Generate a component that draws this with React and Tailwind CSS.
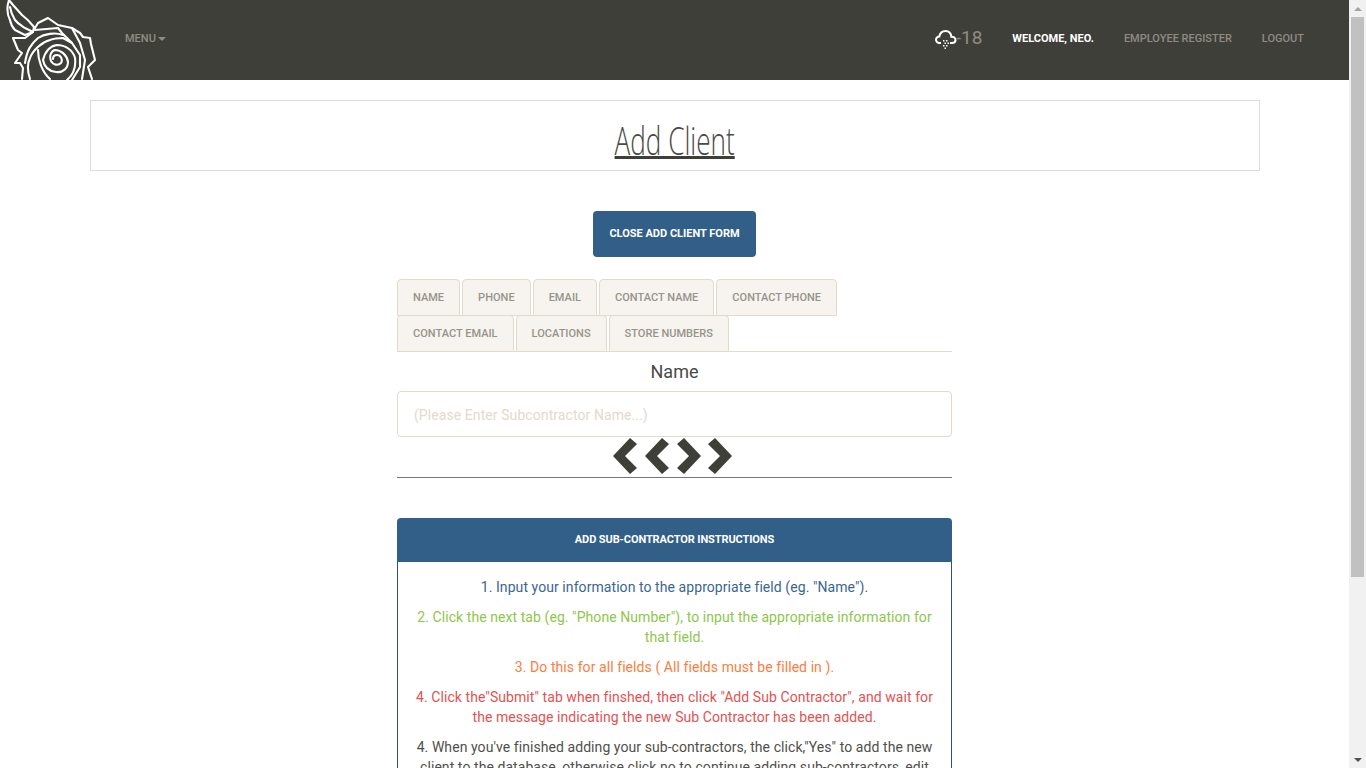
const row1 = ['Name', 'Phone', 'Email', 'Contact Name', 'Contact Phone'];
const row2 = ['Contact Email', 'Locations', 'Store Numbers'];

const Rose = () => (
  <svg viewBox="0 0 100 80" className="w-[100px] h-20 shrink-0" fill="none" stroke="#fff" strokeWidth="2.1" strokeLinejoin="round" strokeLinecap="round">
    {/* leaf */}
    <path d="M9 0 C7 6 7 14 10 20 C11 25 13 28 15 30 L25 35 L33 32 L34 27 C30 22 26 18 22 15 L13 5 Z" />
    <path d="M10 7 C11 13 13 17 15 20 C18 24 22 26 25 28 L33 32" />
    {/* outer edge */}
    <path d="M35 28 L38 23 L48 18 L58 25 L72 28 L80 33 L83 37 L90 38 L91 44 L95 60 L88 67 L92 79" />
    <path d="M33 32 L25 38 L13 38 L18 50 L22 53 L15 63 L20 63 L23 68 L22 79" />
    {/* petals */}
    <path d="M35 30 L58 28 L62 33 L72 43 L80 55 L80 67 L72 80" />
    <path d="M72 28 L80 43 L85 60 L82 79" />
    <path d="M25 63 C27 50 31 44 38 38 C44 34 55 32 63 35" />
    <path d="M30 79 C27 70 28 62 30 58 C33 50 42 42 50 40 C55 38 60 38 63 38 L72 43" />
    {/* centre spiral */}
    <path d="M38 50 C38 60 42 72 50 79" />
    <path d="M67 80 C74 74 76 66 75 58 C73 50 65 45 57 45 C50 46 45 52 43 60 C44 66 48 71 56 72 C63 73 68 68 68 62 C67 55 61 50 55 50 C51 51 49 56 51 61 C53 65 58 66 61 63 C63 60 61 55 57 55 C54 55 53 57 53 59" />
  </svg>
);

const Cloud = () => (
  <svg viewBox="0 0 22 20" className="w-[22px] h-5 -mr-px" fill="none">
    <path d="M6 14 H4.5 C2.5 14 1 12.5 1 10.8 C1 9 2.5 7.6 4.3 7.6 C5 4 7.5 2 10.5 2 C13.7 2 16 4.2 16.4 7.8 C18.7 7.6 20.5 9 20.5 11 C20.5 12.7 19 14 17 14 H15" stroke="#fff" strokeWidth="2" />
    <g fill="#fff">
      <rect x="8" y="11" width="1.5" height="1.5" />
      <rect x="11" y="11" width="1.5" height="1.5" />
      <rect x="9.5" y="13.5" width="1.5" height="1.5" />
      <rect x="12.5" y="13.5" width="1.5" height="1.5" />
      <rect x="8" y="16" width="1.5" height="1.5" />
      <rect x="11" y="16" width="1.5" height="1.5" />
      <rect x="9.5" y="18.5" width="1.5" height="1.5" />
    </g>
  </svg>
);

const ChevronLeft = () => (
  <svg viewBox="0 0 25 36" className="w-[25px] h-9 -mt-[2px]" fill="#3f3f3a">
    <polygon points="17,0 0,18 17,36 24,30 12,18 24,6" />
  </svg>
);

const ChevronRight = () => (
  <svg viewBox="0 0 24 36" className="w-6 h-9 -mt-[2px]" fill="#3f3f3a">
    <polygon points="7,0 24,18 7,36 0,30 12,18 0,6" />
  </svg>
);

const Tab = ({ label }) => (
  <button className="h-[37px] -mb-px px-[15px] pt-[2px] bg-[#f7f4ef] border border-[#e2dacd] rounded-t-[4px] text-[11px] font-medium uppercase tracking-[0.02px] text-[#96938a] whitespace-nowrap">
    {label}
  </button>
);

const App = () => {
  return (
    <div className="h-screen flex overflow-hidden bg-white font-['Roboto',sans-serif] text-[#50504a]">
      <div className="flex-1 min-w-0">
        <header className="h-20 bg-[#3f3f3a] flex items-center">
          <Rose />
          <button className="ml-[25px] -mt-[2px] text-[11px] font-medium uppercase text-[#8f8c82] flex items-center gap-[2px]">
            Menu
            <span className="w-0 h-0 border-x-4 border-x-transparent border-t-4 border-t-[#8f8c82]"></span>
          </button>
          <div className="ml-auto pr-[45px] -mt-[2px] flex items-center">
            <Cloud />
            <span className="text-[19px] -mt-px text-[#8f8c82]">-18</span>
            <span className="ml-[30px] text-[11px] font-bold uppercase text-white">Welcome, Neo.</span>
            <a className="ml-[30px] text-[11px] font-medium uppercase text-[#8f8c82]">Employee Register</a>
            <a className="ml-[30px] text-[11px] font-medium uppercase text-[#8f8c82]">Logout</a>
          </div>
        </header>

        <main className="pt-5 pb-[60px] px-[90px]">
          <div className="h-[71px] -mr-px border border-[#dcdcdc] flex items-center justify-center">
            <h1 className="text-[39px] leading-none mt-2 font-['Open_Sans',sans-serif] font-light text-[#4a4a45] underline decoration-[3px] decoration-[#3f3f3a] underline-offset-[1px] scale-x-[0.67] whitespace-nowrap">Add Client</h1>
          </div>

          <div className="mt-10 flex justify-center">
            <button className="h-[46px] w-[163px] bg-[#325f88] rounded-[4px] text-[11px] font-bold uppercase text-white">
              Close Add Client Form
            </button>
          </div>

          <div className="w-[555px] mx-auto mt-[22px]">
            <div className="border-b border-[#e2dacd]">
              <div className="flex gap-[2px]">
                {row1.map((t) => <Tab key={t} label={t} />)}
              </div>
              <div className="flex gap-[2px]">
                {row2.map((t) => <Tab key={t} label={t} />)}
              </div>
            </div>

            <div className="mt-[9px] text-center text-[18px] leading-[21px] text-[#4a4a45]">Name</div>
            <input
              placeholder="(Please Enter Subcontractor Name...)"
              className="mt-[9px] w-full h-[46px] px-4 pt-[2px] border border-[#e2dacd] rounded-[4px] text-[14px] tracking-[0.08px] placeholder:text-[#e2dacd]"
            />
            <div className="h-10 pr-[4px] flex justify-center items-center gap-[7px] border-b border-[#777] box-content">
              <ChevronLeft />
              <ChevronLeft />
              <ChevronRight />
              <ChevronRight />
            </div>

            <section className="mt-10">
              <div className="h-[44px] bg-[#325f88] rounded-t-[4px] flex items-center justify-center text-[11px] font-bold uppercase tracking-[-0.1px] text-white">
                Add Sub-Contractor Instructions
              </div>
              <div className="px-[15px] pt-[15px] pb-5 border-x border-b border-[#33506e] rounded-b-[4px] text-center text-[14px] tracking-[0.07px] leading-5 space-y-[10px]">
                <p className="text-[#3a6690]">1. Input your information to the appropriate field (eg. "Name").</p>
                <p className="text-[#8dc74c]">2. Click the next tab (eg. "Phone Number"), to input the appropriate information for that field.</p>
                <p className="text-[#fa7d42]">3. Do this for all fields ( All fields must be filled in ).</p>
                <p className="text-[#e35252]">4. Click the"Submit" tab when finshed, then click "Add Sub Contractor", and wait for the message indicating the new Sub Contractor has been added.</p>
                <p>4. When you've finished adding your sub-contractors, the click,"Yes" to add the new client to the database, otherwise click no to continue adding sub-contractors, edit entries, or cancel.</p>
              </div>
            </section>
          </div>
        </main>
      </div>

      {/* page scrollbar as it shows in the picture */}
      <div className="w-[17px] shrink-0 h-full bg-[#f1f1f1] flex flex-col items-center">
        <div className="h-[17px] shrink-0 flex items-center justify-center">
          <span className="w-0 h-0 border-x-4 border-x-transparent border-b-4 border-b-[#a3a3a3]"></span>
        </div>
        <div className="w-[13px] h-[560px] bg-[#c1c1c1]"></div>
        <div className="mt-auto h-[17px] shrink-0 flex items-center justify-center">
          <span className="w-0 h-0 border-x-4 border-x-transparent border-t-4 border-t-[#505050]"></span>
        </div>
      </div>
    </div>
  );
};

export default App;
